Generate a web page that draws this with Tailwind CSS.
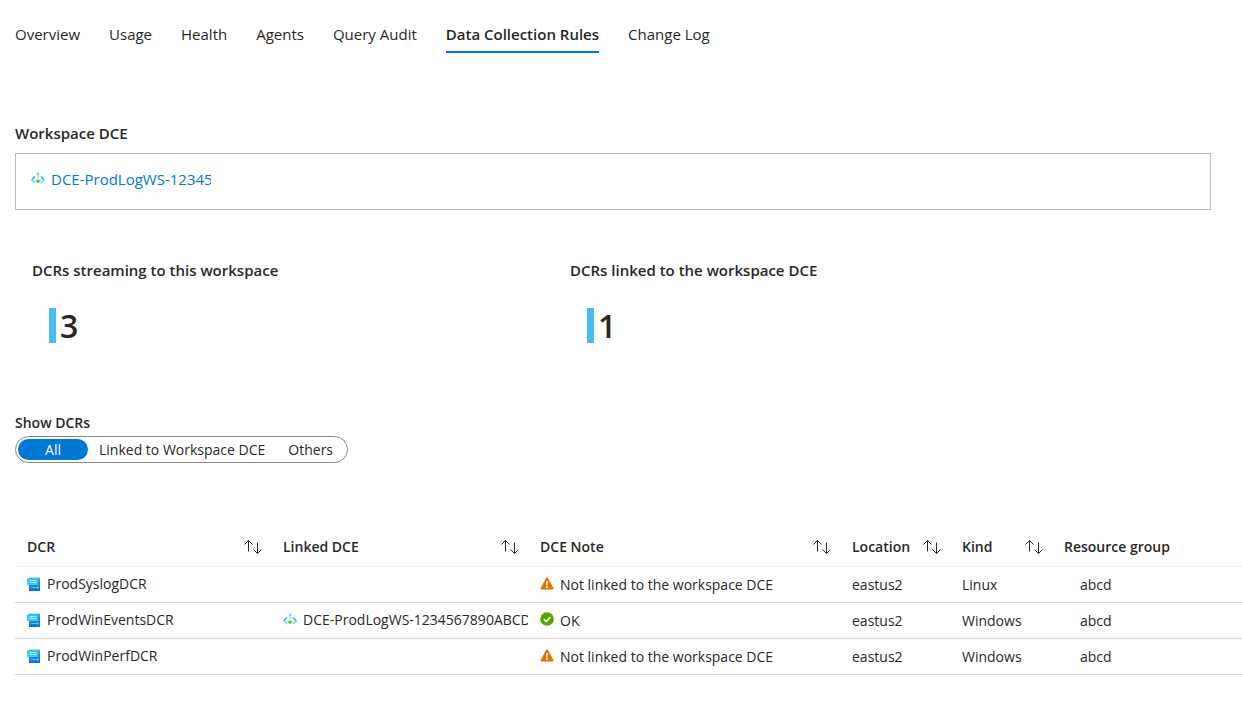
<!DOCTYPE html>
<html lang="en">
<head>
<meta charset="utf-8">
<meta name="viewport" content="width=device-width, initial-scale=1">
<title>Data Collection Rules</title>
<script src="https://cdn.jsdelivr.net/npm/@tailwindcss/browser@4"></script>
</head>
<body class="bg-white font-['Open_Sans','Noto_Sans',sans-serif] text-sm leading-5 text-[#292827]">
<svg class="absolute size-0" aria-hidden="true">
  <defs>
    <linearGradient id="ruleBody" x1="0" y1="0" x2="0" y2="1"><stop offset="0" stop-color="#5ea0ef"/><stop offset=".35" stop-color="#2f86e0"/><stop offset="1" stop-color="#0078d4"/></linearGradient>
    <linearGradient id="ruleTag" x1="0" y1="0" x2="0" y2="1"><stop offset="0" stop-color="#2fc3ee"/><stop offset="1" stop-color="#32d4f5"/></linearGradient>
  </defs>
  <symbol id="sort" viewBox="0 0 20 16"><path d="M6.500 12.500V1.500M2.500 5.500l4-4 4 4M15.500 3.500v11M11.500 10.500l4 4 4-4" fill="none" stroke="currentColor" stroke-width="1"/></symbol>
  <symbol id="endpoint" viewBox="0 0 14 14">
    <path d="M3.600 5L1 7.700" stroke="#2f9be8" stroke-width="1.400" fill="none" stroke-linecap="round"/>
    <path d="M1 7.700L3.800 10.800" stroke="#50e6ff" stroke-width="1.400" fill="none" stroke-linecap="round"/>
    <path d="M10.400 5L13 7.700" stroke="#2f9be8" stroke-width="1.400" fill="none" stroke-linecap="round"/>
    <path d="M13 7.700L10.200 10.800" stroke="#50e6ff" stroke-width="1.400" fill="none" stroke-linecap="round"/>
    <path d="M7 2v7M5 7v2.500h4V7" stroke="#9cbfb0" stroke-width=".8" fill="none"/>
    <circle cx="7" cy="1.900" r="1.300" fill="#50dcf5"/><circle cx="7" cy="9.300" r="1.500" fill="#6fae22"/>
  </symbol>
  <symbol id="rule" viewBox="0 0 14 15">
    <path d="M2 0h11v2H2z" fill="#c3dcf5"/>
    <path d="M2 1h11v13H2z" fill="url(#ruleBody)"/>
    <rect x="0" y="1.500" width="11" height="6.500" rx=".6" fill="url(#ruleTag)"/>
    <path d="M2.500 3.500h7M2.500 5.500h7" stroke="#9cf0ff" stroke-width="1"/>
    <path d="M4 10.500h7.500M10 9.200l1.500 1.300-1.500 1.300" stroke="#7db8f0" stroke-width=".9" fill="none"/>
  </symbol>
  <symbol id="warn" viewBox="0 0 14 13"><path d="M6.200.7a.9.900 0 0 1 1.600 0l5.700 10.500a.9.900 0 0 1-.8 1.300H1.300a.9.900 0 0 1-.8-1.300z" fill="#db7500"/><path d="M6.200 4h1.600l-.2 4.300H6.400z" fill="#fff"/><circle cx="7" cy="10" r=".9" fill="#fff"/></symbol>
  <symbol id="ok" viewBox="0 0 14 14"><circle cx="7" cy="7" r="6.800" fill="#57a300"/><path d="M3.800 7.200l2.400 2.300 4.100-4.500" stroke="#fff" stroke-width="1.700" fill="none"/></symbol>
</svg>

<main class="pl-[15px] pt-5">
  <nav class="flex h-[33px] gap-[29px] pt-1 text-[15px]" aria-label="Workspace sections">
    <a href="#overview">Overview</a>
    <a href="#usage">Usage</a>
    <a href="#health">Health</a>
    <a href="#agents">Agents</a>
    <a href="#audit">Query Audit</a>
    <a href="#dcr" aria-current="page" class="border-b-2 border-[#0078d4] font-semibold">Data Collection Rules</a>
    <a href="#log">Change Log</a>
  </nav>

  <section class="mr-[31px] pt-[70px] text-[15px]">
    <h2 class="font-semibold">Workspace DCE</h2>
    <div class="mt-[10px] border border-[#bdbdbd] px-[15px] pt-[15px] pb-5">
      <a href="#dce" class="flex w-[180px] items-center gap-1.5 overflow-hidden whitespace-nowrap text-[#0078d4]"><svg class="size-3.5 shrink-0"><use href="#endpoint"/></svg><span class="min-w-0 overflow-hidden">DCE-ProdLogWS-1234567890ABCD</span></a>
    </div>
  </section>

  <section class="mr-[31px] grid grid-cols-[538fr_641fr] pt-[50px] pl-[17px] text-[15px]">
    <div>
      <h2 class="font-semibold">DCRs streaming to this workspace</h2>
      <p class="mt-7 ml-[17px] flex h-[35px] items-center border-l-[7px] border-[#47bdf5] pl-1 text-[32px] font-semibold">3</p>
    </div>
    <div>
      <h2 class="font-semibold">DCRs linked to the workspace DCE</h2>
      <p class="mt-7 ml-[17px] flex h-[35px] items-center border-l-[7px] border-[#47bdf5] pl-1 text-[32px] font-semibold">1</p>
    </div>
  </section>

  <section class="pt-[70px]">
    <h2 id="show" class="font-semibold">Show DCRs</h2>
    <div role="group" aria-labelledby="show" class="mt-[3px] inline-flex h-[27px] items-center rounded-full border border-[#8a8886] px-0.5">
      <button type="button" aria-pressed="true" class="h-[21px] w-[70px] rounded-full bg-[#0078d4] text-white">All</button>
      <button type="button" aria-pressed="false" class="px-[11px]">Linked to Workspace DCE</button>
      <button type="button" aria-pressed="false" class="px-3">Others</button>
    </div>
  </section>

  <table class="mt-[65px] w-full table-fixed border-collapse text-left whitespace-nowrap">
    <colgroup><col class="w-[256px]"><col class="w-[257px]"><col class="w-[312px]"><col class="w-[110px]"><col class="w-[102px]"><col></colgroup>
    <thead>
      <tr class="h-[38px] border-b border-[#f0f0f0]">
        <th class="pr-[9px] pl-3 font-semibold"><button type="button" class="flex w-full items-center justify-between">DCR<svg class="h-4 w-5"><use href="#sort"/></svg></button></th>
        <th class="pr-[9px] pl-3 font-semibold"><button type="button" class="flex w-full items-center justify-between">Linked DCE<svg class="h-4 w-5"><use href="#sort"/></svg></button></th>
        <th class="pr-[9px] pl-3 font-semibold"><button type="button" class="flex w-full items-center justify-between">DCE Note<svg class="h-4 w-5"><use href="#sort"/></svg></button></th>
        <th class="pr-[9px] pl-3 font-semibold"><button type="button" class="flex w-full items-center justify-between">Location<svg class="h-4 w-5"><use href="#sort"/></svg></button></th>
        <th class="pr-[9px] pl-3 font-semibold"><button type="button" class="flex w-full items-center justify-between">Kind<svg class="h-4 w-5"><use href="#sort"/></svg></button></th>
        <th class="pl-3 font-semibold">Resource group</th>
      </tr>
    </thead>
    <tbody>
      <tr class="h-9 border-b border-[#d4d4d4]">
        <td class="pl-3"><div class="flex items-center gap-1.5"><svg class="h-[15px] w-3.5"><use href="#rule"/></svg>ProdSyslogDCR</div></td>
        <td></td>
        <td class="pt-0.5 pl-3"><div class="flex items-center gap-1.5"><svg class="mb-1 h-[13px] w-3.5"><use href="#warn"/></svg>Not linked to the workspace DCE</div></td>
        <td class="pt-0.5 pl-3">eastus2</td><td class="pt-0.5 pl-3">Linux</td><td class="pt-0.5 pl-7">abcd</td>
      </tr>
      <tr class="h-9 border-b border-[#d4d4d4]">
        <td class="pl-3"><div class="flex items-center gap-1.5"><svg class="h-[15px] w-3.5"><use href="#rule"/></svg>ProdWinEventsDCR</div></td>
        <td class="pl-3"><div class="flex items-center gap-1.5"><svg class="size-3.5 shrink-0"><use href="#endpoint"/></svg><span class="min-w-0 overflow-hidden">DCE-ProdLogWS-1234567890ABCD</span></div></td>
        <td class="pt-0.5 pl-3"><div class="flex items-center gap-1.5"><svg class="mb-1 size-3.5"><use href="#ok"/></svg>OK</div></td>
        <td class="pt-0.5 pl-3">eastus2</td><td class="pt-0.5 pl-3">Windows</td><td class="pt-0.5 pl-7">abcd</td>
      </tr>
      <tr class="h-9 border-b border-[#d4d4d4]">
        <td class="pl-3"><div class="flex items-center gap-1.5"><svg class="h-[15px] w-3.5"><use href="#rule"/></svg>ProdWinPerfDCR</div></td>
        <td></td>
        <td class="pt-0.5 pl-3"><div class="flex items-center gap-1.5"><svg class="mb-1 h-[13px] w-3.5"><use href="#warn"/></svg>Not linked to the workspace DCE</div></td>
        <td class="pt-0.5 pl-3">eastus2</td><td class="pt-0.5 pl-3">Windows</td><td class="pt-0.5 pl-7">abcd</td>
      </tr>
    </tbody>
  </table>
</main>
</body>
</html>
